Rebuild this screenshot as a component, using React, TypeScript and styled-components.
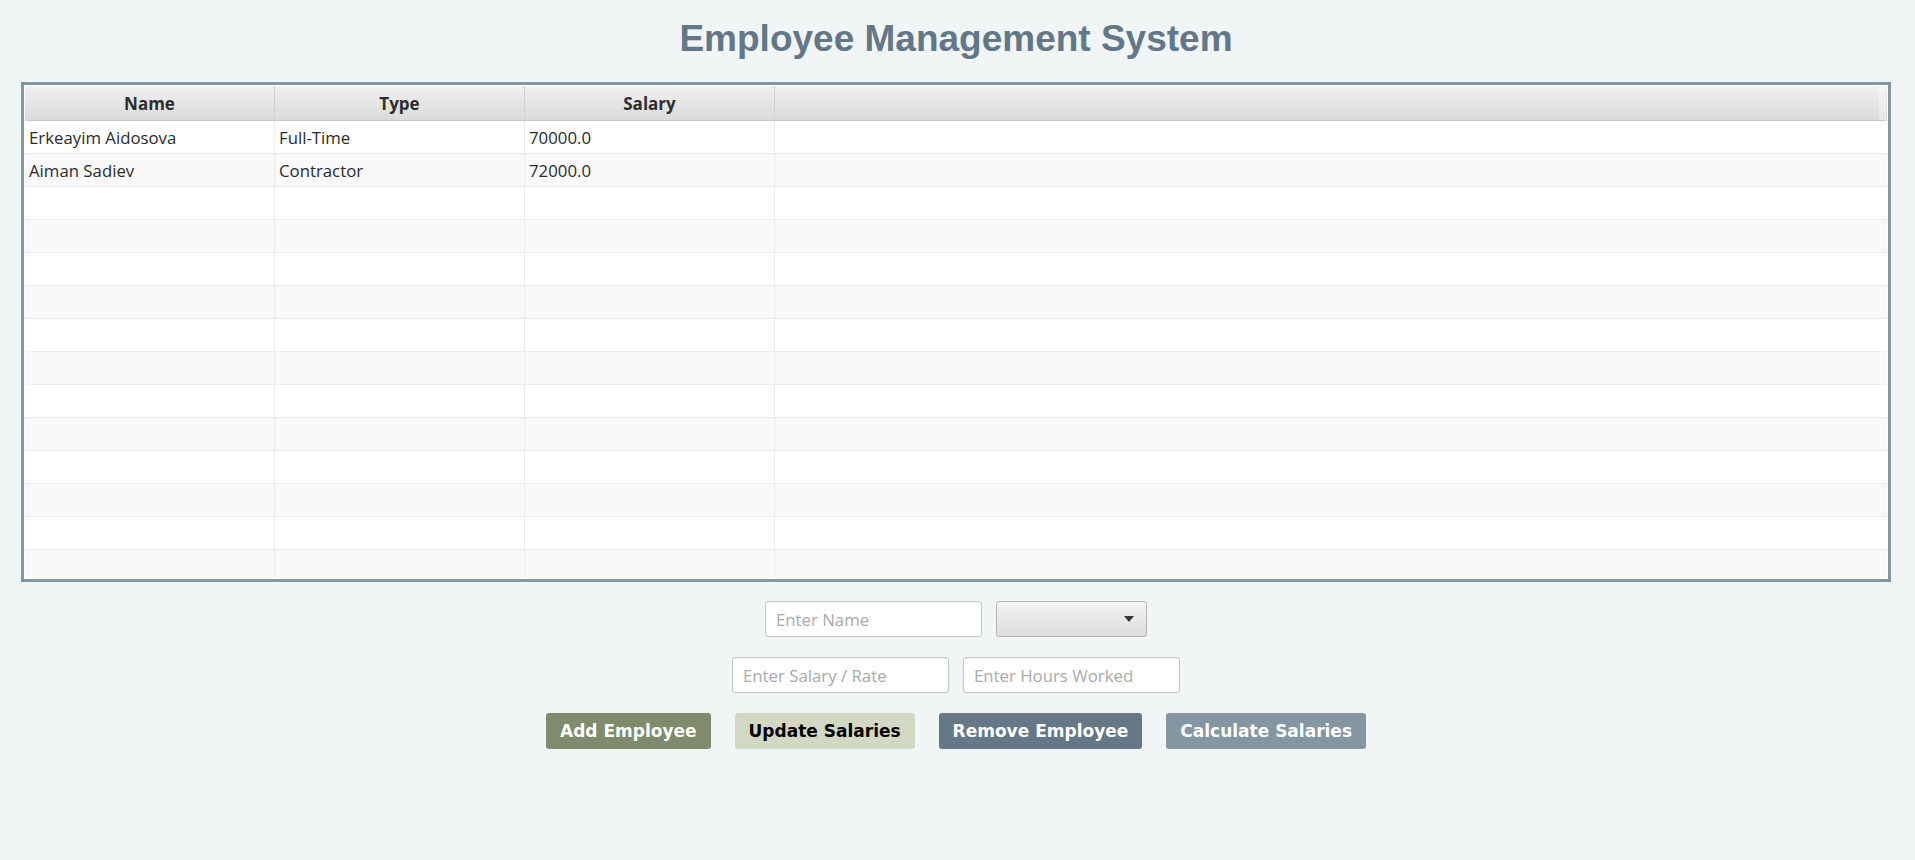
import React from "react";
import styled, { createGlobalStyle } from "styled-components";

const GlobalStyle = createGlobalStyle`
  html, body { margin: 0; padding: 0; background: #f2f5f6; }
  * { box-sizing: border-box; }
`;

const Page = styled.div`
  min-height: 860px;
  background: #f2f5f6;
  padding: 19px 24px 0 21px;
  font-family: "Open Sans", "Noto Sans", sans-serif;
`;

const Title = styled.h1`
  margin: 0 0 23px 0;
  text-align: center;
  font-family: "Liberation Sans", Arial, sans-serif;
  font-weight: 700;
  font-size: 37px;
  line-height: 40px;
  color: #627788;
`;

const TableFrame = styled.div`
  border: 3px solid #8596a3;
  padding: 1px;
  background: #ffffff;
  height: 500px;
  overflow: hidden;
`;

const Grid = `
  display: grid;
  grid-template-columns: 250px 250px 250px 1fr;
`;

const HeaderRow = styled.div`
  ${Grid};
  height: 35px;
  background: linear-gradient(#f1f1f1, #dadada);
  border-bottom: 1px solid #c9c9c9;
`;

const HeaderCell = styled.div<{ $last?: boolean }>`
  display: flex;
  align-items: center;
  justify-content: center;
  font-weight: 700;
  font-size: 17px;
  color: #2e2e2e;
  border-right: 1px solid ${(p) => (p.$last ? "transparent" : "#d2d2d2")};
  box-shadow: ${(p) => (p.$last ? "inset -7px 0 0 rgba(255,255,255,0.35)" : "none")};
`;

const Body = styled.div`
  height: 457px;
  overflow: hidden;
`;

const Row = styled.div<{ $alt: boolean }>`
  ${Grid};
  height: 33px;
  background: ${(p) => (p.$alt ? "#f9f9f9" : "#ffffff")};
  border-bottom: 1px solid #ececec;
`;

const Cell = styled.div`
  display: flex;
  align-items: center;
  padding: 0 4px;
  font-size: 16.8px;
  color: #2b2b2b;
  border-right: 1px solid #ececec;
  white-space: nowrap;
  &:last-child { border-right: none; }
`;

const Controls = styled.div`
  display: flex;
  flex-direction: column;
  align-items: center;
  gap: 20px;
  margin-top: 19px;
`;

const FormRow = styled.div`
  display: flex;
  gap: 14px;
  justify-content: center;
`;

const TextInput = styled.input`
  width: 217px;
  height: 36px;
  border: 1px solid #c6c6c6;
  border-radius: 3px;
  background: #ffffff;
  box-shadow: inset 0 1px 2px rgba(0, 0, 0, 0.06);
  padding: 0 10px;
  font-family: "Open Sans", "Noto Sans", sans-serif;
  font-size: 16.8px;
  color: #333;
  outline: none;
  &::placeholder { color: #aaaaaa; }
`;

const Combo = styled.div`
  width: 151px;
  height: 36px;
  border: 1px solid #b5b5b5;
  border-radius: 3px;
  background: linear-gradient(#f4f4f4, #dcdcdc);
  display: flex;
  align-items: center;
  justify-content: flex-end;
  padding-right: 12px;
`;

const Arrow = styled.span`
  width: 0;
  height: 0;
  border-left: 5.5px solid transparent;
  border-right: 5.5px solid transparent;
  border-top: 6px solid #3a3a3a;
`;

const ButtonRow = styled.div`
  display: flex;
  gap: 24px;
  justify-content: center;
`;

const variants: Record<string, { bg: string; fg: string }> = {
  add: { bg: "#818a6c", fg: "#ffffff" },
  update: { bg: "#d3d8c4", fg: "#000000" },
  remove: { bg: "#667885", fg: "#ffffff" },
  calc: { bg: "#8596a3", fg: "#ffffff" },
};

const ActionButton = styled.button<{ $variant: string }>`
  height: 36px;
  padding: 0 14px;
  border: none;
  border-radius: 3px;
  background: ${(p) => variants[p.$variant].bg};
  color: ${(p) => variants[p.$variant].fg};
  font-family: "DejaVu Sans", Verdana, sans-serif;
  font-weight: 700;
  font-size: 17px;
  cursor: pointer;
`;

const employees = [
  { name: "Erkeayim Aidosova", type: "Full-Time", salary: "70000.0" },
  { name: "Aiman Sadiev", type: "Contractor", salary: "72000.0" },
];

export default function App() {
  const rows = Array.from({ length: 14 }, (_, i) => employees[i]);
  return (
    <>
      <GlobalStyle />
      <Page>
        <Title>Employee Management System</Title>
        <TableFrame>
          <HeaderRow>
            <HeaderCell>Name</HeaderCell>
            <HeaderCell>Type</HeaderCell>
            <HeaderCell>Salary</HeaderCell>
            <HeaderCell $last />
          </HeaderRow>
          <Body>
            {rows.map((r, i) => (
              <Row key={i} $alt={i % 2 === 1}>
                <Cell>{r ? r.name : ""}</Cell>
                <Cell>{r ? r.type : ""}</Cell>
                <Cell>{r ? r.salary : ""}</Cell>
                <Cell />
              </Row>
            ))}
          </Body>
        </TableFrame>
        <Controls>
          <FormRow>
            <TextInput placeholder="Enter Name" />
            <Combo>
              <Arrow />
            </Combo>
          </FormRow>
          <FormRow>
            <TextInput placeholder="Enter Salary / Rate" />
            <TextInput placeholder="Enter Hours Worked" />
          </FormRow>
          <ButtonRow>
            <ActionButton $variant="add">Add Employee</ActionButton>
            <ActionButton $variant="update">Update Salaries</ActionButton>
            <ActionButton $variant="remove">Remove Employee</ActionButton>
            <ActionButton $variant="calc">Calculate Salaries</ActionButton>
          </ButtonRow>
        </Controls>
      </Page>
    </>
  );
}
